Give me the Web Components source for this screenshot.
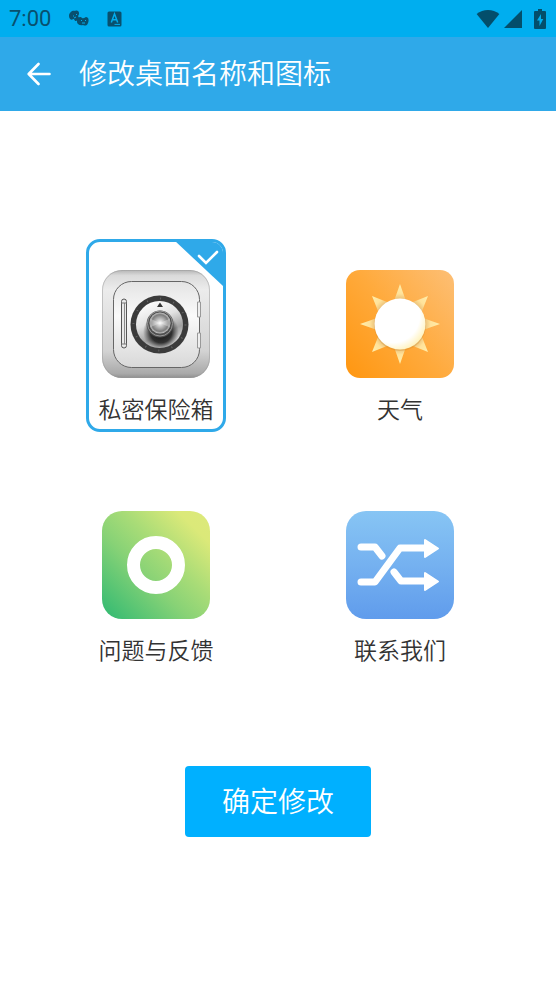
<!DOCTYPE html>
<html lang="zh-CN">
<head>
<meta charset="utf-8">
<meta name="viewport" content="width=device-width, initial-scale=1">
<title>修改桌面名称和图标</title>
<style>
  body {
    margin: 0;
    background: #fff;
    color: #333;
    font-family: Roboto, "Noto Sans CJK SC", sans-serif;
  }
</style>
</head>
<body>
<launcher-page></launcher-page>

<script>
// Every icon is a small element that fills the box its user gives it.
function defineIcon(name, viewBox, shapes) {
  const template = document.createElement('template');
  template.innerHTML = `
    <style>
      :host { display: block; flex: none; }
      svg { display: block; width: 100%; height: 100%; }
    </style>
    <svg viewBox="${viewBox}" fill="none" aria-hidden="true">${shapes}</svg>
  `;
  window.customElements.define(name, class extends HTMLElement {
    constructor() {
      super();
      this.attachShadow({ mode: 'open' });
      this.shadowRoot.appendChild(template.content.cloneNode(true));
    }
  });
}

defineIcon('icon-back', '0 0 24 24', `
  <path d="M22.5 12H2M11.5 2 1.7 12l9.8 10" stroke="#fff" stroke-width="2.6" stroke-linecap="round" stroke-linejoin="round"/>
`);

defineIcon('icon-masks', '0 0 20 17', `
  <path d="M0 6C0 2 4 0 6 1c2-1 4 0 4 2 0 1 0 2-1 3 1 1 1 3 0 4l-2 1c-2 0-1-2-3-2-1 2-4 0-4-3z" fill="#08506e"/>
  <path d="M8 9c1-2 4-3 5-1 2 1 3-1 4-1 3 0 3 4 2 6-1 3-3 3-5 2-3 1-6-1-6-3z" fill="#08506e"/>
  <path d="M4 6h1M7 4l1 1M5 8l2-1M12 10l1 1M16 10l1 1M13 13h3" stroke="#00aeef" stroke-width="1"/>
`);

defineIcon('icon-input', '0 0 15 16', `
  <rect x="0.5" y="0.5" width="14" height="15" rx="1.5" fill="#08506e"/>
  <path d="m4.3 11.5 3.2-8.7 3.2 8.7M5.4 8.7h4.2" stroke="#00aeef" stroke-width="1.5"/>
  <path d="M7.5 13.4H13" stroke="#00aeef"/>
`);

defineIcon('icon-wifi', '0 0 24 18', `
  <path d="M12 18 .6 4C4 1.200 8 0 12 0s8 1.200 11.400 4z" fill="#034e6b"/>
`);

defineIcon('icon-signal', '0 0 18 18', `
  <path d="M18 0v18H0z" fill="#034e6b"/>
`);

defineIcon('icon-battery', '0 0 12 20', `
  <path d="M4 0h4v2h3q1 0 1 1v16q0 1-1 1H1q-1 0-1-1V3q0-1 1-1h3z" fill="#034e6b"/>
  <path d="M7 5 3 11.500h2.500V17L9.300 10H7z" fill="#00aeef"/>
`);

defineIcon('icon-check', '0 0 50 47', `
  <path d="M0 0h50v47z" fill="#2fa9e9"/>
  <path d="m25 16 7 7L43 12" stroke="#fff" stroke-width="2.600" stroke-linecap="round"/>
`);

defineIcon('icon-safe', '0 0 108 108', `
  <defs>
    <linearGradient id="body" x1="0" y1="0" x2="0" y2="1">
      <stop offset="0" stop-color="#b4b4b4"/>
      <stop offset=".05" stop-color="#dadada"/>
      <stop offset=".18" stop-color="#ececec"/>
      <stop offset=".75" stop-color="#d3d3d3"/>
      <stop offset=".96" stop-color="#a9a9a9"/>
      <stop offset="1" stop-color="#8e8e8e"/>
    </linearGradient>
    <linearGradient id="door" x1="0" y1="0" x2="0" y2="1">
      <stop offset="0" stop-color="#e4e4e4"/>
      <stop offset=".4" stop-color="#fafafa"/>
      <stop offset="1" stop-color="#d8d8d8"/>
    </linearGradient>
    <linearGradient id="dial" x1=".25" y1="0" x2=".7" y2="1">
      <stop offset="0" stop-color="#fff"/>
      <stop offset=".4" stop-color="#e2e2e2"/>
      <stop offset=".7" stop-color="#a1a1a1"/>
      <stop offset="1" stop-color="#e8e8e8"/>
    </linearGradient>
    <radialGradient id="shade">
      <stop offset="0" stop-color="#111"/>
      <stop offset=".6" stop-color="#222" stop-opacity=".9"/>
      <stop offset="1" stop-color="#444" stop-opacity="0"/>
    </radialGradient>
    <radialGradient id="knob">
      <stop offset="0" stop-color="#fff"/>
      <stop offset=".35" stop-color="#c4c4c4"/>
      <stop offset=".8" stop-color="#7c7c7c"/>
      <stop offset="1" stop-color="#c8c8c8"/>
    </radialGradient>
  </defs>
  <rect width="108" height="108" rx="20" fill="url(#body)"/>
  <rect x=".5" y=".5" width="107" height="107" rx="19.500" stroke="#999" stroke-opacity=".5"/>
  <rect x="11.500" y="11.500" width="86" height="86" rx="18" fill="url(#door)" stroke="#666"/>
  <path d="M95.500 32h3v15h-3zM95.500 63h3v15h-3z" fill="#eee" stroke="#999"/>
  <rect x="19.500" y="29" width="5" height="49" rx="2.500" fill="#e9e9e9" stroke="#555"/>
  <path d="M22.500 33v41" stroke="#8b8b8b"/>
  <path d="M19 33h6M19 74h6" stroke="#777"/>
  <circle cx="57.500" cy="54.500" r="29" fill="#3b3b3b"/>
  <circle cx="57.500" cy="54.500" r="26" stroke="#666" stroke-width="2" stroke-dasharray="1 12.600"/>
  <circle cx="57.500" cy="54.500" r="23.500" fill="url(#dial)"/>
  <circle cx="59" cy="62" r="18" fill="url(#shade)"/>
  <path d="m58 32.500 3 4.500h-6z" fill="#333"/>
  <circle cx="58" cy="54" r="13.500" fill="#505050"/>
  <circle cx="58" cy="53.500" r="12.500" stroke="#999" stroke-width="1"/>
  <circle cx="58" cy="53" r="10.500" fill="url(#knob)"/>
  <path d="m58 53-9-4v8zM58 53l9-4v8z" fill="#fff" fill-opacity=".3"/>
`);

defineIcon('icon-weather', '0 0 108 108', `
  <defs>
    <linearGradient id="sky" x1="0" y1=".9" x2="1" y2=".1">
      <stop offset="0" stop-color="#ff9814"/>
      <stop offset=".5" stop-color="#ffaa3c"/>
      <stop offset="1" stop-color="#fdbd70"/>
    </linearGradient>
    <radialGradient id="rays" gradientUnits="userSpaceOnUse" cx="54" cy="54" r="41">
      <stop offset=".62" stop-color="#edc47c"/>
      <stop offset=".74" stop-color="#ffe29a"/>
      <stop offset="1" stop-color="#fff0ae"/>
    </radialGradient>
    <radialGradient id="sun" cx=".36" cy=".34" r=".73">
      <stop offset=".72" stop-color="#fff"/>
      <stop offset="1" stop-color="#fff1b5"/>
    </radialGradient>
  </defs>
  <rect width="108" height="108" rx="14" fill="url(#sky)"/>
  <path d="m54 14 7 20H47zM94 54l-20 7V47zM54 94l-7-20h14zM14 54l20-7v14zM82 26l-8 20L62 34zM82 82l-20-8 12-12zM26 82l8-20 12 12zM26 26l20 8-12 12z" fill="url(#rays)"/>
  <circle cx="54" cy="55" r="26" fill="#c98427" fill-opacity=".3"/>
  <circle cx="54" cy="54" r="25.500" fill="url(#sun)"/>
`);

defineIcon('icon-feedback', '0 0 108 108', `
  <defs>
    <linearGradient id="leaf" x1="0" y1="1" x2="1" y2="0">
      <stop offset="0" stop-color="#2eb972"/>
      <stop offset=".4" stop-color="#87d276"/>
      <stop offset=".6" stop-color="#a9dc77"/>
      <stop offset=".85" stop-color="#dbe979"/>
      <stop offset="1" stop-color="#dce97b"/>
    </linearGradient>
  </defs>
  <rect width="108" height="108" rx="20" fill="url(#leaf)"/>
  <circle cx="54" cy="54" r="22.500" stroke="#fff" stroke-width="13"/>
`);

defineIcon('icon-contact', '0 0 108 108', `
  <defs>
    <linearGradient id="air" x1="0" y1="0" x2="0" y2="1">
      <stop offset="0" stop-color="#87c5f4"/>
      <stop offset=".5" stop-color="#75b1f0"/>
      <stop offset="1" stop-color="#609cec"/>
    </linearGradient>
  </defs>
  <rect width="108" height="108" rx="20" fill="url(#air)"/>
  <g stroke="#fff" stroke-width="7" stroke-linecap="round" stroke-linejoin="round">
    <path d="M15 36h14l7 9M15 71h14l25-34h26M48 61l7 9h25"/>
  </g>
  <path d="M79 29v17l13-8.500zM79 62v17l13-8.500z" fill="#fff" stroke="#fff" stroke-width="2" stroke-linejoin="round"/>
`);

const statusBar = document.createElement('template');
statusBar.innerHTML = `
    <style>
      :host {
        display: flex;
        align-items: center;
        justify-content: space-between;
        height: 37px;
        padding: 0 10px 0 9px;
        background: #00aeef;
        color: #08506e;
        font-size: 22px;
      }
      div { display: flex; align-items: center; }
      .notices { gap: 18px; }
      .system { gap: 4px; }
      icon-masks { width: 20px; height: 17px; }
      icon-input { width: 15px; height: 16px; }
      icon-wifi { width: 24px; height: 18px; }
      icon-signal { width: 18px; height: 18px; }
      icon-battery { width: 12px; height: 20px; margin-left: 8px; }
    </style>
    <div class="notices">
      <span><slot></slot></span>
      <icon-masks></icon-masks>
      <icon-input></icon-input>
    </div>
    <div class="system">
      <icon-wifi></icon-wifi>
      <icon-signal></icon-signal>
      <icon-battery></icon-battery>
    </div>
`;

class StatusBar extends HTMLElement {
  constructor() {
    super();
    this.attachShadow({ mode: 'open' });
    this.shadowRoot.appendChild(statusBar.content.cloneNode(true));
  }
}

const titleBar = document.createElement('template');
titleBar.innerHTML = `
    <style>
      :host {
        display: flex;
        align-items: center;
        gap: 13px;
        height: 74px;
        padding: 0 12px;
        background: #2fa9e9;
        color: #fff;
      }
      button {
        padding: 15px;
        border: 0;
        background: none;
        cursor: pointer;
      }
      icon-back { width: 24px; height: 24px; }
      h1 {
        margin: 0;
        padding-top: 2px;
        font-size: 28px;
        font-weight: 350;
        line-height: 40px;
      }
    </style>
    <button type="button" aria-label="返回"><icon-back></icon-back></button>
    <h1><slot></slot></h1>
`;

class TitleBar extends HTMLElement {
  constructor() {
    super();
    this.attachShadow({ mode: 'open' });
    this.shadowRoot.appendChild(titleBar.content.cloneNode(true));
    this.shadowRoot.querySelector('button').addEventListener('click', () => history.back());
  }
}

const iconOption = document.createElement('template');
iconOption.innerHTML = `
    <style>
      :host { display: block; width: 140px; }
      label {
        display: flex;
        flex-direction: column;
        align-items: center;
        gap: 16px;
        position: relative;
        overflow: hidden;
        padding: 28px 0 1px;
        border: 3px solid transparent;
        border-radius: 14px;
        font-size: 23px;
        font-weight: 350;
        line-height: 34px;
        white-space: nowrap;
        cursor: pointer;
      }
      input {
        position: absolute;
        margin: 0;
        opacity: 0;
      }
      ::slotted([slot="icon"]) { width: 108px; height: 108px; }
      icon-check {
        display: none;
        position: absolute;
        top: -2px;
        right: -1px;
        width: 50px;
        height: 47px;
      }
      label:has(:checked) { border-color: #2fa9e9; }
      :checked ~ icon-check { display: block; }
      label:has(:focus-visible) { outline: 2px solid #08506e; }
    </style>
    <label>
      <input type="radio" name="launcher">
      <slot name="icon"></slot>
      <span><slot></slot></span>
      <icon-check></icon-check>
    </label>
`;

class IconOption extends HTMLElement {
  constructor() {
    super();
    this.attachShadow({ mode: 'open' });
    this.shadowRoot.appendChild(iconOption.content.cloneNode(true));
    this._getInputElement().addEventListener('change', () => {
      this.dispatchEvent(new CustomEvent('option-picked', { bubbles: true }));
    });
  }

  _getInputElement() {
    return this.shadowRoot.querySelector('input');
  }

  set checked(value) {
    this._getInputElement().checked = value;
  }

  connectedCallback() {
    this.checked = this.hasAttribute('checked');
  }
}

const iconPicker = document.createElement('template');
iconPicker.innerHTML = `
    <style>
      :host {
        display: grid;
        grid-template-columns: auto auto;
        justify-content: space-around;
        row-gap: 48px;
      }
    </style>
    <slot></slot>
`;

class IconPicker extends HTMLElement {
  constructor() {
    super();
    this.attachShadow({ mode: 'open' });
    this.shadowRoot.appendChild(iconPicker.content.cloneNode(true));
    // radios in separate shadow roots do not group by themselves
    this.addEventListener('option-picked', (event) => {
      this.querySelectorAll('icon-option').forEach((option) => {
        option.checked = option === event.target;
      });
    });
  }

  connectedCallback() {
    this.setAttribute('role', 'radiogroup');
  }
}

const page = document.createElement('template');
page.innerHTML = `
    <style>
      :host { display: block; }
      main {
        display: flex;
        flex-direction: column;
        gap: 93px;
        padding: 128px 34px 40px;
      }
      .confirm {
        align-self: center;
        padding: 17px 37px 14px;
        border: 0;
        border-radius: 4px;
        background: #00b0ff;
        color: #fff;
        font: inherit;
        font-size: 28px;
        font-weight: 350;
        line-height: 40px;
        cursor: pointer;
      }
    </style>
    <status-bar>7:00</status-bar>
    <title-bar>修改桌面名称和图标</title-bar>
    <main>
      <icon-picker aria-label="图标">
        <icon-option checked><icon-safe slot="icon"></icon-safe>私密保险箱</icon-option>
        <icon-option><icon-weather slot="icon"></icon-weather>天气</icon-option>
        <icon-option><icon-feedback slot="icon"></icon-feedback>问题与反馈</icon-option>
        <icon-option><icon-contact slot="icon"></icon-contact>联系我们</icon-option>
      </icon-picker>
      <button class="confirm" type="button">确定修改</button>
    </main>
`;

class LauncherPage extends HTMLElement {
  constructor() {
    super();
    this.attachShadow({ mode: 'open' });
    this.shadowRoot.appendChild(page.content.cloneNode(true));
  }
}

window.customElements.define('status-bar', StatusBar);
window.customElements.define('title-bar', TitleBar);
window.customElements.define('icon-option', IconOption);
window.customElements.define('icon-picker', IconPicker);
window.customElements.define('launcher-page', LauncherPage);
</script>
</body>
</html>
